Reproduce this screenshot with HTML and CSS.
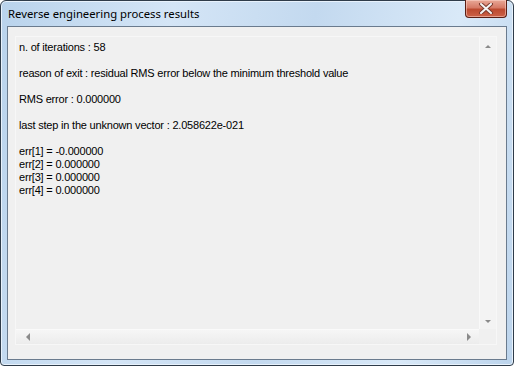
FILE: index.html
```html
<!DOCTYPE html>
<html lang="en">
<head>
    <meta charset="UTF-8">
    <title>Reverse engineering process results</title>
<link rel="stylesheet" href="styles.css">
</head>
<body>
    <div class="window">
        <div class="titlebar">
            <span class="title">Reverse engineering process results</span>
            <div class="close">
                <svg width="16" height="11" viewBox="0 0 16 11">
                    <path d="M3 1 L13 10 M13 1 L3 10" stroke="#7a3a2e" stroke-width="4" stroke-linecap="round"/>
                    <path d="M3 1 L13 10 M13 1 L3 10" stroke="#f4f4f4" stroke-width="2" stroke-linecap="round"/>
                </svg>
            </div>
        </div>
        <div class="client">
            <div class="edit">
                <div class="edit-row">
<pre class="output">n. of iterations : 58

reason of exit : residual RMS error below the minimum threshold value

RMS error : 0.000000

last step in the unknown vector : 2.058622e-021

err[1] = -0.000000
err[2] = 0.000000
err[3] = 0.000000
err[4] = 0.000000</pre>
                    <div class="vscroll">
                        <span class="arrow up"></span>
                        <span class="arrow down"></span>
                    </div>
                </div>
                <div class="hscroll">
                    <span class="arrow left"></span>
                    <span class="arrow right"></span>
                </div>
            </div>
        </div>
    </div>
</body>
</html>
```

FILE: styles.css
```css
*{
    padding:0;
    margin:0;
    box-sizing:border-box;
}
body{
    background:#ffffff;
}
.window{
    width:514px;
    height:366px;
    display:flex;
    flex-direction:column;
    border:1px solid #2f3c4a;
    border-radius:6px 6px 4px 4px;
    background:linear-gradient(100deg,#b9d3ec 0%,#d4e5f6 30%,#c3d9ef 55%,#d9e9f8 80%,#bcd4ec 100%);
    box-shadow:inset 0 0 0 1px #e8f2fc;
}
.titlebar{
    height:25px;
    display:flex;
    justify-content:space-between;
    align-items:flex-start;
    padding-left:7px;
}
.title{
    font-family:"Noto Sans",sans-serif;
    font-size:11.3px;
    color:#000;
    margin-top:5px;
}
.close{
    width:42px;
    height:18px;
    margin-right:6px;
    margin-top:-1px;
    display:flex;
    justify-content:center;
    align-items:center;
    border:1px solid #5a1e14;
    border-top:none;
    border-radius:0 0 4px 4px;
    background:linear-gradient(#e8a897 0%,#d67a66 45%,#bc4a30 55%,#cc6248 100%);
    box-shadow:inset 0 0 0 1px rgba(255,220,210,0.5);
}
.client{
    flex:1;
    margin:0 6px 5px 6px;
    border:1px solid #6a7b8e;
    background:#f0f0f0;
    padding:9px 9px 14px 7px;
}
.edit{
    height:100%;
    display:flex;
    flex-direction:column;
    border:1px solid #f7f7f7;
}
.edit-row{
    flex:1;
    display:flex;
}
.output{
    flex:1;
    font-family:"Liberation Sans",Arial,sans-serif;
    font-size:11px;
    letter-spacing:-0.2px;
    line-height:13px;
    color:#000;
    padding:4px 0 0 3px;
}
.vscroll{
    width:17px;
    display:flex;
    flex-direction:column;
    justify-content:space-between;
    align-items:center;
    padding:8px 0 6px 0;
    background:#f3f3f3;
    border-left:1px solid #f9f9f9;
}
.hscroll{
    height:15px;
    margin-right:17px;
    display:flex;
    justify-content:space-between;
    align-items:center;
    padding:0 8px 0 10px;
    background:linear-gradient(#f6f6f6,#ececec);
    border-top:1px solid #fafafa;
}
.arrow{
    width:0;
    height:0;
}
.up{
    border-left:3px solid transparent;
    border-right:3px solid transparent;
    border-bottom:3px solid #8a8a8a;
}
.down{
    border-left:3px solid transparent;
    border-right:3px solid transparent;
    border-top:3px solid #8a8a8a;
}
.left{
    border-top:4px solid transparent;
    border-bottom:4px solid transparent;
    border-right:4px solid #8a8a8a;
}
.right{
    border-top:4px solid transparent;
    border-bottom:4px solid transparent;
    border-left:4px solid #8a8a8a;
}
```
